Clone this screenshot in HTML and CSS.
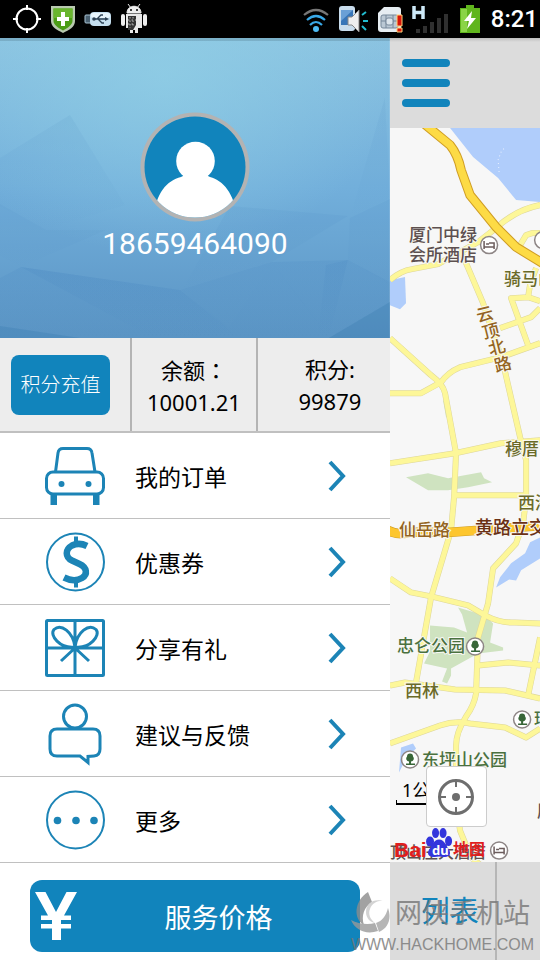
FILE: index.html
```html
<!DOCTYPE html>
<html lang="zh-CN">
<head>
<meta charset="utf-8">
<meta name="viewport" content="width=device-width, initial-scale=1">
<title>个人中心</title>
<link rel="stylesheet" href="styles.css">
</head>
<body>
<div class="app">
  <header class="status">
    <div class="status-group">
      <svg class="status-icon" viewBox="0 0 30 32" width="30" height="32" fill="none" stroke="#fff" stroke-width="2"><circle cx="15" cy="16" r="10.5"/><path d="M15 2v5M15 25v5M1 16h5M24 16h5"/></svg>
      <svg class="status-icon" viewBox="0 0 26 30" width="26" height="30"><path d="M1 2h24v15c0 6-6 9-12 12C7 26 1 23 1 17z" fill="#b9c9b0"/><path d="M3.500 4.500h19V17c0 4-5 7-9.500 9.500C8.500 24 3.500 21 3.500 17z" fill="#4c9d16"/><path d="M13 4.500h9.500V14H3.500V4.500z" fill="#69b52e"/><path d="M11 8h4v5h4v4h-4v5h-4v-5H7v-4h4z" fill="#fff"/></svg>
      <svg class="status-icon" viewBox="0 0 28 18" width="28" height="18"><rect x="1" y="5" width="7" height="8" rx="1" fill="#4a6070" stroke="#a9c4d4"/><rect x="6" y="2" width="21" height="14" rx="4" fill="#c5dfef"/><rect x="7" y="3" width="19" height="5" rx="2" fill="#e8f6fd"/><g fill="none" stroke="#2d4255" stroke-width="1.300"><path d="M10 9h12M13 9l4-4h2M14 9l4 4h2"/></g><circle cx="10" cy="9" r="1.800" fill="#2d4255"/><path d="M21 7l4 2-4 2z" fill="#2d4255"/></svg>
      <svg class="status-icon" viewBox="0 0 28 32" width="28" height="32"><path d="M7 10c0-9 14-9 14 0zM8 1l3 4M20 1l-3 4" fill="#eee" stroke="#eee"/><circle cx="11" cy="7" r="1"/><circle cx="17" cy="7" r="1"/><rect x="1" y="11" width="4" height="12" rx="2" fill="#eee"/><rect x="23" y="11" width="4" height="12" rx="2" fill="#eee"/><path d="M6 11h16v14h-4v5h-3v-3h-2v3h-3v-5H6z" fill="#e8e8e8"/><path d="M8 13h8v9l-3 5H8z" fill="#333"/><path d="M10 14v11M13 14v9M8 17h8M8 21h7" stroke="#bbb" stroke-dasharray="1.500 2"/></svg>
    </div>
    <div class="status-group status-right">
      <svg class="status-icon" viewBox="1 0 26 30" width="26" height="30" fill="none" stroke-width="2.200"><path d="M2 11Q14 1 26 11" stroke="#777"/><path d="M5 16Q14 8 23 16M8 21Q14 15 20 21" stroke="#39a9e8"/><circle cx="14" cy="25" r="3" fill="#4dbcf5"/></svg>
      <svg class="status-icon" viewBox="1 0 31 30" width="31" height="30"><rect x="2" y="2" width="16" height="25" rx="3" fill="#c8dcec"/><rect x="4" y="6" width="12" height="15" fill="#3876b8"/><path d="M4 6h12L4 17z" fill="#6aa0d6"/><path d="M11 13h4l7-7v22l-7-7h-4z" fill="#eee" stroke="#888"/><path d="M25 11l4-3M26 17h5M25 22l4 4" stroke="#22bcd0" stroke-width="2"/></svg>
      <svg class="status-icon" viewBox="1 0 25 30" width="25" height="30"><path d="M7 3h14q3 0 3 3v19q0 3-3 3H4q-3 0-3-3V9z" fill="#e6edf2"/><rect x="4" y="11" width="17" height="13" rx="2" fill="#bac8d4" stroke="#76889a"/><path d="M4 17h17M9 11v13M16 11v13" stroke="#76889a"/><rect x="9" y="14" width="7" height="7" rx="2" fill="#dce5ec" stroke="#76889a"/><path d="M20 11h5v11h-5zM20 24h5v4h-5z" fill="#d71408" stroke="#ffd37b"/></svg>
      <svg class="status-icon" viewBox="1 0 37 32" width="37" height="32"><path d="M3 3v13M12 3v13M3 9.500h9" stroke="#cde9f8" stroke-width="3.500" fill="none"/><path d="M5 26h4v4H5zM12 23h4v7h-4zM19 19h4v11h-4zM26 15h4v15h-4zM33 11h4v19h-4z" fill="#303030"/></svg>
      <svg class="status-icon" viewBox="0 0 24 32" width="24" height="32"><path d="M8 2h8v3h6v25H2V5h6z" fill="#60b51d"/><path d="M3 6h6v23H3z" fill="#8ad447"/><path d="M14 8L6 18h5l-2 8 9-11h-5z" fill="#fff"/></svg>
      <time class="clock">8:21</time>
    </div>
  </header>

  <div class="screen">
    <aside class="drawer">
      <section class="profile">
        <svg class="profile-bg" viewBox="0 0 390 300" preserveAspectRatio="none" aria-hidden="true">
          <defs>
            <linearGradient id="sky" x1="0" y1="0" x2="0" y2="1"><stop offset="0" stop-color="#8bc3e1"/><stop offset=".5" stop-color="#72afdb"/><stop offset="1" stop-color="#5a94c4"/></linearGradient>
            <radialGradient id="glow" cx=".42" cy=".12" r=".6"><stop offset="0" stop-color="#91d0e6" stop-opacity=".7"/><stop offset="1" stop-color="#91d0e6" stop-opacity="0"/></radialGradient>
            <linearGradient id="facet" x1="0" y1="0" x2="0" y2="1"><stop offset="0" stop-color="#3f7ebc" stop-opacity=".14"/><stop offset="1" stop-color="#3f7ebc" stop-opacity="0"/></linearGradient>
          </defs>
          <path fill="url(#sky)" d="M0 0h390v300H0z"/>
          <path fill="url(#glow)" d="M0 0h390v300H0z"/>
          <g fill="url(#facet)">
            <g opacity=".6"><path d="M70 77L0 120v48l45 24z"/><path d="M70 77L45 192l80-25z"/><path d="M0 166l46 26 60 0-85 37L0 218z"/>
            <path d="M385 60l-35 120 40-20z"/><path d="M230 168l118 10-76 46-90 28z"/><path d="M350 180l-2 42 42 25v-86z"/></g>
            <path d="M21 229L0 240v60h240l-60-48z"/><path d="M21 229l159 23 48 36v12h-75z"/><path d="M272 224l-92 28 49 37z"/>
            <path d="M272 224l-43 65-4 11h105z"/><path d="M272 224l57 76 61-36v-20l-42-22z"/><path d="M348 222l-22 5-8 73h11z"/>
          </g>
          <path d="M390 264l-61 36h61z" fill="#397caf" fill-opacity=".35"/><path d="M0 288l80 12H0z" fill="#397caf" fill-opacity=".3"/>
          <path d="M0 0h390v3H0z" fill="#446878" fill-opacity=".25"/>
        </svg>
        <svg class="avatar" viewBox="0 0 110 110" role="img" aria-label="头像">
          <defs><clipPath id="face"><circle cx="55" cy="55" r="50.500"/></clipPath></defs>
          <circle cx="55" cy="55" r="54.500" fill="#b3b3b3"/><circle cx="55" cy="55" r="50.500" fill="#1184bc"/>
          <g clip-path="url(#face)" fill="#fff"><circle cx="55.500" cy="49" r="19.300"/><path d="M43 61q2 3-2 4C26 69 15 82 13 110h85C95 82 84 69 70 65q-4-1-2-4z"/></g>
        </svg>
        <p class="phone">18659464090</p>
      </section>

      <section class="stats">
        <div class="stat-action"><button class="recharge" type="button">积分充值</button></div>
        <div class="stat"><span>余额<span class="colon" lang="zh-TW">：</span></span><span>10001.21</span></div>
        <div class="stat stat-points"><span>积分:</span><span>99879</span></div>
      </section>

      <nav>
        <ul class="menu">
          <li><a href="#orders">
            <svg class="menu-icon" viewBox="0 0 60 58"><path d="M10.500 25L13 6q.6-4.500 5-4.500h24q4.400 0 5 4.500l3 19"/><rect x="1.500" y="25" width="57" height="22" rx="6.500"/><path class="fill" d="M5.500 47h6.500v11H5.500zM48 47h6.500v11H48z"/><circle class="fill" cx="16.500" cy="37" r="3"/><circle class="fill" cx="43.500" cy="37" r="3"/></svg>
            <span class="label">我的订单</span><svg class="chevron" viewBox="0 0 18 32"><path d="M2 2l13 14L2 30"/></svg></a></li>
          <li><a href="#coupons">
            <svg class="menu-icon" viewBox="0 0 60 58"><circle class="thin" cx="30.500" cy="29" r="28.500"/><path d="M31 3.500v7M31 48v6.500" stroke-width="4"/><path d="M42 13C37 10.500 31 10.500 27 12.500C20 16.500 20 24 27 27.500L34.500 31C42 34.500 43 41.500 37 45C32 48 25 47.500 19 44.500" stroke-width="6.500"/></svg>
            <span class="label">优惠券</span><svg class="chevron" viewBox="0 0 18 32"><path d="M2 2l13 14L2 30"/></svg></a></li>
          <li><a href="#share">
            <svg class="menu-icon" viewBox="0 0 60 58"><rect x="1.500" y="1.500" width="57" height="55" rx="1"/><path d="M30 2v54M2 29h56M30 28C15 30 4 16 9 10.500C16 4 28 13 30 28C32 13 44 4 51 10.500C56 16 45 30 30 28M30 29L16 42M30 29l14 13"/></svg>
            <span class="label">分享有礼</span><svg class="chevron" viewBox="0 0 18 32"><path d="M2 2l13 14L2 30"/></svg></a></li>
          <li><a href="#feedback">
            <svg class="menu-icon" viewBox="0 0 60 58"><circle cx="30" cy="11.500" r="11.500"/><path d="M12 24h36q7 0 7 7v13q0 6.500-6 7l-6 .5v6l-8-6.500H12q-7 0-7-7V31q0-7 7-7z"/></svg>
            <span class="label">建议与反馈</span><svg class="chevron" viewBox="0 0 18 32"><path d="M2 2l13 14L2 30"/></svg></a></li>
          <li><a href="#more">
            <svg class="menu-icon" viewBox="0 0 60 58"><circle class="thin" cx="30.500" cy="29" r="28.500"/><g class="fill"><circle cx="12.500" cy="29.500" r="3.800"/><circle cx="31" cy="29.500" r="3.800"/><circle cx="49" cy="29.500" r="3.800"/></g></svg>
            <span class="label">更多</span><svg class="chevron" viewBox="0 0 18 32"><path d="M2 2l13 14L2 30"/></svg></a></li>
        </ul>
      </nav>

      <div class="price-wrap">
        <button class="price" type="button">
          <svg class="yen" viewBox="0 0 42 48" aria-hidden="true"><path d="M0 0h10.500l10.500 20L31.500 0h10.500L29 23.500h7V28H26v4H36v4.500H26V48h-9V36.500H6V32h11v-4H6v-4.500h7z" fill="#fff"/></svg>
          <span>服务价格</span>
        </button>
      </div>
    </aside>

    <main class="content">
      <div class="topbar">
        <button class="burger" type="button" aria-label="菜单"><i></i><i></i><i></i></button>
      </div>
      <div class="map">
        <svg class="map-art" viewBox="390 128 150 734" preserveAspectRatio="xMinYMin slice">
          <g fill="#b0cdfb">
            <path d="M450 128l23 29 25 21 18 22 24 2v-74z"/><path d="M390 280l15-3 1 26-6 6-10-4z"/>
            <path d="M496 587l4-10 11-14 14-10 5-11 10-5v21l-19 12-5 10-7-1z"/><path d="M401 747l12-4 3 5-10 10-7 14z"/>
          </g>
          <path d="M499 172l-1-12 3-8 4-5" fill="none" stroke="#e8f1ff" stroke-dasharray="1 3"/>
          <g fill="#cfe3c0">
            <path d="M406 477l22-4 20 5 33-6 3 6 8 4-24 5-20 3-20 0z"/><path d="M443 400l5 3 1 14h-3z"/>
            <path d="M458 607l27 8 8 8-3 19 13 5v3l-25 3-27 15 0 7-4 8-5-2 5-13-23-5 6-12 0-26 24 2 13 5-5-18z"/>
          </g>
          <g class="road-edge"><use href="#roads"/></g>
          <g class="road-fill"><g id="roads">
            <path d="M390 280Q400 271 412 269L438 264L478 242L496 228Q515 210 540 205"/>
            <path d="M461 252L466 263L483 303L503 363L520 437L526 460V497L523 523L516 543L493 568L488 603L478 637L476 693Q474 705 466 716Q456 732 456 745V800L460 830L471 857L480 864"/>
            <path d="M390 338L431 375Q443 384 445 393L456 453L454 497L451 530L431 597L416 682"/>
            <path d="M390 393H421L441 382Q448 372 460 367L501 357L540 343"/>
            <path d="M390 463L455 453L501 443L540 440"/><path d="M453 495H526"/>
            <path d="M528 345L511 298L528 297L540 301M528 297L530 284L536 268M500 328L531 317L540 308"/>
            <path d="M520 245L526 235L532 233H540"/>
            <path d="M390 578L411 592L431 596L468 605L485 615Q500 623 515 622L540 623"/>
            <path d="M390 685L405 682L455 689L505 690L540 698"/><path d="M478 665L508 662L540 665M540 637L528 695"/>
            <path d="M390 743L440 725Q455 720 470 723L505 727L526 737L540 728"/>
          </g></g>
          <g fill="none"><path d="M422 122L450 145Q458 155 461 170L470 195L496 227L516 247L544 264M386 529Q398 536 410 532H451L544 525" stroke="#cf9d25" stroke-width="9.500"/><path d="M422 122L450 145Q458 155 461 170L470 195L496 227L516 247L544 264" stroke="#fddb45" stroke-width="7.500"/><path d="M386 529Q398 536 410 532H451L544 525" stroke="#fdc62e" stroke-width="8.500"/></g>
          <g class="pin"><circle cx="489" cy="245" r="8.500"/><circle cx="543" cy="240" r="8.500"/><circle cx="499" cy="850" r="8.500"/></g>
          <g class="pin-glyph"><path d="M484 241v8M484 247h10v2M486 244h3M489 243h5v4M494 846v8M494 852h10v2M496 849h3M499 848h5v4"/></g>
          <g class="pin"><circle cx="475" cy="646" r="8.500"/><circle cx="522" cy="719" r="8.500"/><circle cx="410" cy="759" r="8.500"/></g>
          <g fill="#386638"><path id="tree" d="M474 650v-2a3 3 0 0 1-2-5a3 3 0 0 1 6 0a3 3 0 0 1-2 5v2h4v1.500h-9V650z"/><use href="#tree" x="47" y="73"/><use href="#tree" x="-65" y="113"/></g>
          <g class="map-text">
            <g class="poi"><text x="409" y="241">厦门中绿</text><text x="409" y="261">会所酒店</text><text x="390" y="857" font-size="16">顶山庄大酒店</text><text x="537" y="816">康</text></g>
            <g class="area"><text x="504" y="285">骑马山</text><text x="505" y="455">穆厝</text><text x="518" y="509">西潘</text><text x="405" y="697">西林</text></g>
            <g class="street"><text transform="translate(478 322) rotate(-14)">云</text><text transform="translate(484 339) rotate(-14)">顶</text><text transform="translate(490 355) rotate(-14)">北</text><text transform="translate(496 372) rotate(-14)">路</text><text x="399" y="536">仙岳路</text></g>
            <text class="junction" x="475" y="534">黄路立交</text>
            <g class="park"><text x="397" y="652">忠仑公园</text><text x="534" y="725">环岛</text><text x="422" y="765">东坪山公园</text></g>
            <g class="brand"><text x="394" y="856">Bai</text><text x="453" y="854" font-size="16">地图</text></g>
          </g>
          <g fill="#3335dc"><ellipse cx="430" cy="841" rx="4" ry="5"/><ellipse cx="435.500" cy="832.500" rx="3.500" ry="5"/><ellipse cx="443" cy="832.500" rx="3.500" ry="5"/><ellipse cx="448.500" cy="840.500" rx="3.500" ry="5"/><path d="M439 839c6 0 7 7 10 10 4 8-5 8-10 7-5 1-14 1-10-7 3-3 4-10 10-10z"/></g>
          <text class="du" x="432" y="854">du</text>
        </svg>
        <div class="scale">1公里</div>
        <button class="locate" type="button" aria-label="定位"><svg viewBox="0 0 38 38" width="38" height="38" fill="none" stroke="#6e6e6e"><circle cx="19" cy="19" r="16.500" stroke-width="3"/><path d="M19 3v6M19 29v6M3 19h6M29 19h6" stroke-width="2"/><circle cx="19" cy="19" r="4" fill="#6e6e6e" stroke="none"/></svg></button>
      </div>
      <nav class="tabs"><a class="tab" href="#list">列表</a><a class="tab tab-next" href="#map" aria-label="地图"></a></nav>
    </main>
  </div>

  <div class="watermark">
    <svg class="mark" viewBox="0 0 40 42"><path d="M17 0C3 9 2 27 13 33C10 24 13 15 21 10z" fill="#8c8c8c"/><path d="M0 28c7 4 17 5 24 3l3 8C15 43 4 38 0 28z" fill="#999"/><path d="M37 16c4 11 0 20-9 24l-3-9c6-2 10-7 12-15z" fill="#a5a5a5"/><path d="M33 9C23 6 15 11 15 20c0 6 4 10 9 11-5-4-7-9-5-14 2-6 8-9 14-8z" fill="#c9c9c9"/></svg>
    <div class="mark-name">网侠手机站</div>
    <div class="mark-url">WWW.HACKHOME.COM</div>
  </div>
</div>
</body>
</html>
```
FILE: styles.css
```css
* { box-sizing: border-box; }

body {
  margin: 0;
  color: #000;
  font-family: "Noto Sans", "Noto Sans CJK SC", sans-serif;
}

button {
  padding: 0;
  border: 0;
  font: inherit;
}

a { color: inherit; text-decoration: none; }

.app {
  position: relative;
  display: flex;
  flex-direction: column;
  min-height: 100vh;
  overflow: hidden;
}

/* Status bar */
.status {
  display: flex;
  align-items: center;
  justify-content: space-between;
  height: 38px;
  padding: 0 2px 0 12px;
  background: #000;
}

.status-group { display: flex; align-items: center; gap: 8px; }
.status-right { gap: 9px; }
.status-icon { flex: none; }
.clock {
  color: #fff;
  font: 500 24px/38px Roboto, sans-serif;
}

/* Split screen */
.screen { display: flex; flex: 1; }

.drawer {
  display: flex;
  flex: 0 0 72.2%;
  flex-direction: column;
  background: #fff;
}

.profile {
  position: relative;
  display: flex;
  flex-direction: column;
  align-items: center;
  height: 300px;
  padding-top: 74px;
}

.profile-bg {
  position: absolute;
  inset: 0;
  width: 100%;
  height: 100%;
}

.avatar { position: relative; width: 110px; height: 110px; }

.phone {
  position: relative;
  margin: 0;
  color: #fff;
  font: 30px/44px Roboto, sans-serif;
}

.stats {
  display: grid;
  grid-template-columns: 130fr 126fr 134fr;
  height: 95px;
  border-bottom: 2px solid #c0c0c0;
  background: #ededed;
}

.stat-action { padding: 17px 20px 0 11px; }

.recharge {
  width: 100%;
  height: 60px;
  border-radius: 8px;
  background: #1184bc;
  color: #fff;
  font-size: 20px;
  font-weight: 300;
  line-height: 28px;
}

.stat {
  display: flex;
  flex-direction: column;
  align-items: center;
  padding-top: 15px;
  border-left: 2px solid #b4b4b4;
  font-size: 22px;
  line-height: 32px;
}

.stat-points { padding-left: 12px; }
.colon { font-family: "Noto Sans CJK TC", sans-serif; }

.menu { margin: 0; padding: 0; list-style: none; }

.menu a {
  display: flex;
  align-items: center;
  height: 86px;
  padding: 0 44px 0 45px;
  border-bottom: 1px solid #c0c0c0;
  font-size: 23px;
}

.menu-icon, .chevron {
  flex: none;
  fill: none;
  stroke: #1c84b6;
  stroke-width: 3;
  overflow: visible;
}

.menu-icon { width: 60px; height: 58px; margin-right: 30px; }
.menu-icon .thin { stroke-width: 2; }
.menu-icon .fill { fill: #1c84b6; stroke: none; }
.label { flex: 1; }
.chevron { width: 18px; height: 32px; stroke-width: 4; }

.price-wrap { padding: 17px 30px 8px; }

.price {
  display: flex;
  align-items: center;
  width: 100%;
  height: 72px;
  padding-left: 5px;
  border-radius: 12px;
  background: #1184bc;
  color: #fff;
  font-size: 27px;
}

.price span { flex: 1; text-align: center; }
.yen { width: 42px; height: 48px; }

/* Page behind the drawer */
.content {
  display: flex;
  flex: 1;
  flex-direction: column;
  min-width: 0;
  background: #f7f7f7;
}

.topbar {
  height: 90px;
  padding: 21px 12px;
  background: linear-gradient(#bdbdbd, #dcdcdc 4px);
}

.burger {
  display: flex;
  flex-direction: column;
  gap: 12px;
  width: 48px;
  background: none;
}

.burger i {
  width: 100%;
  height: 8px;
  border-radius: 4px;
  background: #1184bc;
}

.map {
  position: relative;
  flex: 1;
  overflow: hidden;
}

.map-art {
  position: absolute;
  inset: 0;
  width: 100%;
  height: 100%;
}

.road-edge, .road-fill { fill: none; stroke-linejoin: round; }
.road-edge { stroke: #ddd69a; stroke-width: 6; }
.road-fill { stroke: #fdf799; stroke-width: 5; }
.pin { fill: #fff; stroke: #8d8585; stroke-width: 1.5; }
.pin-glyph { fill: none; stroke: #6b5c5c; stroke-width: 1.5; }

.map-text {
  font-size: 17px;
  font-weight: 500;
  paint-order: stroke;
  stroke: #f8f8f4;
  stroke-width: 2;
}

.poi { fill: #5d5050; }
.area { fill: #6a6a28; }
.street { fill: #946421; }
.junction { fill: #6b3115; font-size: 18px; }
.park { fill: #4a713f; }
.brand {
  fill: #e01e1e;
  stroke: none;
  font: 700 21px "Liberation Sans", "Noto Sans CJK SC", sans-serif;
}
.du { fill: #fff; font-size: 13px; font-weight: 700; }

.scale {
  position: absolute;
  bottom: 57px;
  left: 6px;
  padding-left: 6px;
  border-bottom: 2px solid #000;
  font-size: 18px;
  line-height: 26px;
}

.scale::before {
  position: absolute;
  bottom: 0;
  left: 0;
  width: 1px;
  height: 3px;
  background: #000;
  content: "";
}

.locate {
  position: absolute;
  bottom: 35px;
  left: 36px;
  display: grid;
  place-items: center;
  width: 61px;
  height: 61px;
  border: 1px solid #ccc;
  border-radius: 4px;
  background: #fff;
}

.tabs {
  display: flex;
  height: 98px;
  background: #dcdcdc;
}

.tab {
  flex: 0 0 105px;
  padding-left: 15px;
  color: #1184bc;
  font-size: 29px;
  line-height: 98px;
  text-align: center;
}

.tab-next { flex: 1; border-left: 2px solid #b6b6b6; }

.watermark {
  position: absolute;
  right: 6px;
  bottom: 4px;
  display: grid;
  grid-template-columns: 44px auto;
  align-items: center;
  color: #777;
  opacity: .8;
  pointer-events: none;
}

.mark { width: 40px; height: 42px; }
.mark-name { font-size: 27px; line-height: 40px; }
.mark-url {
  grid-column: 1 / 3;
  justify-self: end;
  font: 16px/22px "Liberation Sans", sans-serif;
}
```
